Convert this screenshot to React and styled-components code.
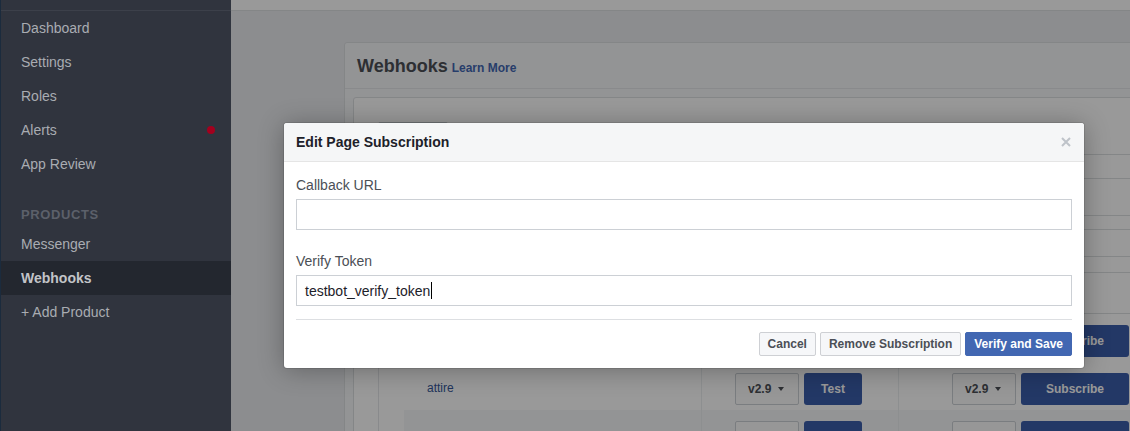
import React from 'react';
import styled, { createGlobalStyle } from 'styled-components';

const GlobalStyle = createGlobalStyle`
  html, body {
    margin: 0;
    padding: 0;
  }
  body {
    font-family: "Liberation Sans", Arial, Helvetica, sans-serif;
    background: #e9ebee;
  }
  * {
    box-sizing: border-box;
  }
`;

const Page = styled.div`
  display: flex;
  width: 1130px;
  height: 431px;
  overflow: hidden;
`;

const Sidebar = styled.nav`
  width: 231px;
  flex: none;
  background: #30343e;
  border-left: 1px solid #1b2b3d;
  .top {
    height: 11px;
    border-bottom: 1px solid #3c404a;
  }
`;

const NavItem = styled.div`
  display: flex;
  align-items: center;
  justify-content: space-between;
  height: 34px;
  padding: 0 16px 0 20px;
  font-size: 14px;
  color: ${(p) => (p.active ? '#c2c4c8' : '#a9acb2')};
  font-weight: ${(p) => (p.active ? 'bold' : 'normal')};
  background: ${(p) => (p.active ? '#23272f' : 'transparent')};
`;

const Dot = styled.span`
  width: 8px;
  height: 8px;
  border-radius: 50%;
  background: #a3001e;
`;

const SectionLabel = styled.div`
  padding: 27px 20px 0;
  height: 46px;
  font-size: 13px;
  line-height: 13px;
  font-weight: bold;
  letter-spacing: 0.6px;
  color: #5c606a;
`;

const Main = styled.main`
  position: relative;
  flex: 1;
  background: #e9ebee;
  overflow: hidden;
`;

const TopBar = styled.div`
  height: 11px;
  background: #fff;
  border-bottom: 1px solid #dddfe2;
`;

const Content = styled.div`
  padding: 31px 0 0 113px;
`;

const Card = styled.section`
  width: 830px;
  background: #f6f7f9;
  border: 1px solid #dddfe2;
  border-radius: 3px;
`;

const CardHeader = styled.header`
  display: flex;
  align-items: baseline;
  gap: 4px;
  height: 46px;
  padding: 13px 12px 0;
  border-bottom: 1px solid #e5e6e9;
  h2 {
    margin: 0;
    font-size: 18px;
    color: #4b4f56;
  }
  a {
    font-size: 12px;
    font-weight: bold;
    color: #4267b2;
    text-decoration: none;
  }
`;

const CardBody = styled.div`
  padding: 8px;
`;

const InnerBox = styled.div`
  background: #fff;
  border: 1px solid #dddfe2;
  border-radius: 3px;
  padding: 24px 0 0 24px;
  height: 400px;
`;

const PageSelect = styled.div`
  width: 70px;
  height: 24px;
  margin-bottom: 8px;
  background: #f6f7f9;
  border: 1px solid #ccd0d5;
  border-radius: 2px;
`;

const Table = styled.div`
  border-left: 1px solid #e5e6e9;
  border-top: 1px solid #dddfe2;
`;

const ThinRow = styled.div`
  height: ${(p) => p.h}px;
  border-bottom: 1px solid #dddfe2;
`;

const DataRow = styled.div`
  display: grid;
  grid-template-columns: 322px 197px 1fr;
  height: 48px;
  background: ${(p) =>
    p.shaded ? 'linear-gradient(to right, transparent 25px, #f6f7f9 25px)' : '#fff'};
`;

const NameCell = styled.div`
  padding: 19px 0 0 48px;
  font-size: 12px;
  color: #365899;
`;

const ActionCell = styled.div`
  display: flex;
  gap: 5px;
  padding: 11px 0 0 ${(p) => p.indent}px;
  border-left: 1px solid #eceef1;
`;

const VersionSelect = styled.div`
  display: flex;
  align-items: center;
  gap: 7px;
  width: 64px;
  height: 32px;
  padding-left: 12px;
  background: #fcfcfc;
  border: 1px solid #ccd0d5;
  border-radius: 2px;
  font-size: 12px;
  font-weight: bold;
  color: #4b4f56;
  &::after {
    content: '';
    border-left: 3.5px solid transparent;
    border-right: 3.5px solid transparent;
    border-top: 4px solid #4b4f56;
  }
`;

const BlueButton = styled.div`
  display: flex;
  align-items: center;
  justify-content: center;
  width: ${(p) => p.w}px;
  height: 32px;
  background: #3b5eaa;
  border-radius: 3px;
  font-size: 12px;
  font-weight: bold;
  color: #fff;
`;

const Overlay = styled.div`
  position: absolute;
  inset: 0;
  background: rgba(0, 0, 0, 0.4);
`;

const Modal = styled.div`
  position: absolute;
  left: 53px;
  top: 123px;
  width: 800px;
  background: #fff;
  border-radius: 3px;
  overflow: hidden;
  box-shadow: 0 2px 26px rgba(0, 0, 0, 0.3), 0 0 0 1px rgba(0, 0, 0, 0.1);
`;

const ModalHeader = styled.div`
  display: flex;
  align-items: center;
  justify-content: space-between;
  height: 39px;
  padding: 0 13px 0 12px;
  background: #f5f6f7;
  border-bottom: 1px solid #e5e5e5;
  h3 {
    margin: 0;
    font-size: 14px;
    color: #1d2129;
  }
`;

const ModalBody = styled.div`
  padding: 14px 12px 12px;
`;

const Label = styled.div`
  margin-top: ${(p) => (p.first ? 0 : 22)}px;
  margin-bottom: 5px;
  font-size: 14px;
  line-height: 18px;
  color: #4b4f56;
`;

const Field = styled.div`
  display: flex;
  align-items: center;
  height: 31px;
  padding: 0 8px;
  border: 1px solid #ccd0d5;
  font-size: 14px;
  color: #1d2129;
`;

const Caret = styled.span`
  width: 1px;
  height: 17px;
  margin-left: 1px;
  background: #000;
`;

const Divider = styled.div`
  height: 1px;
  margin-top: 13px;
  background: #dddfe2;
`;

const Footer = styled.div`
  display: flex;
  justify-content: flex-end;
  gap: 4px;
  margin-top: 12px;
`;

const Button = styled.button`
  height: 24px;
  padding: 0 8px;
  border: 1px solid ${(p) => (p.primary ? '#4267b2' : '#ced0d4')};
  border-radius: 2px;
  background: ${(p) => (p.primary ? '#4267b2' : '#f6f7f9')};
  color: ${(p) => (p.primary ? '#fff' : '#4b4f56')};
  font-family: inherit;
  font-size: 12px;
  font-weight: bold;
`;

const CloseIcon = () => (
  <svg width="10" height="10" viewBox="0 0 10 10">
    <path d="M1 1 L9 9 M9 1 L1 9" stroke="#bec3c9" strokeWidth="2" />
  </svg>
);

const navTop = ['Dashboard', 'Settings', 'Roles', 'Alerts', 'App Review'];

const SubscriptionRow = ({ name, shaded }) => (
  <DataRow shaded={shaded}>
    <NameCell>{name}</NameCell>
    <ActionCell indent={33}>
      <VersionSelect>v2.9</VersionSelect>
      <BlueButton w={58}>Test</BlueButton>
    </ActionCell>
    <ActionCell indent={53}>
      <VersionSelect>v2.9</VersionSelect>
      <BlueButton w={108}>Subscribe</BlueButton>
    </ActionCell>
  </DataRow>
);

const App = () => (
  <>
    <GlobalStyle />
    <Page>
      <Sidebar>
        <div className="top" />
        {navTop.map((name) => (
          <NavItem key={name}>
            {name}
            {name === 'Alerts' && <Dot />}
          </NavItem>
        ))}
        <SectionLabel>PRODUCTS</SectionLabel>
        <NavItem>Messenger</NavItem>
        <NavItem active>Webhooks</NavItem>
        <NavItem>+ Add Product</NavItem>
      </Sidebar>

      <Main>
        <TopBar />
        <Content>
          <Card>
            <CardHeader>
              <h2>Webhooks</h2>
              <a href="#">Learn More</a>
            </CardHeader>
            <CardBody>
              <InnerBox>
                <PageSelect />
                <Table>
                  <ThinRow h={24} />
                  <ThinRow h={37} />
                  <ThinRow h={14} />
                  <ThinRow h={27} />
                  <ThinRow h={16} />
                  <ThinRow h={41} />
                  <SubscriptionRow name="" />
                  <SubscriptionRow name="attire" />
                  <SubscriptionRow name="checkin" shaded />
                </Table>
              </InnerBox>
            </CardBody>
          </Card>
        </Content>

        <Overlay />

        <Modal>
          <ModalHeader>
            <h3>Edit Page Subscription</h3>
            <CloseIcon />
          </ModalHeader>
          <ModalBody>
            <Label first>Callback URL</Label>
            <Field />
            <Label>Verify Token</Label>
            <Field>
              testbot_verify_token
              <Caret />
            </Field>
            <Divider />
            <Footer>
              <Button>Cancel</Button>
              <Button>Remove Subscription</Button>
              <Button primary>Verify and Save</Button>
            </Footer>
          </ModalBody>
        </Modal>
      </Main>
    </Page>
  </>
);

export default App;
